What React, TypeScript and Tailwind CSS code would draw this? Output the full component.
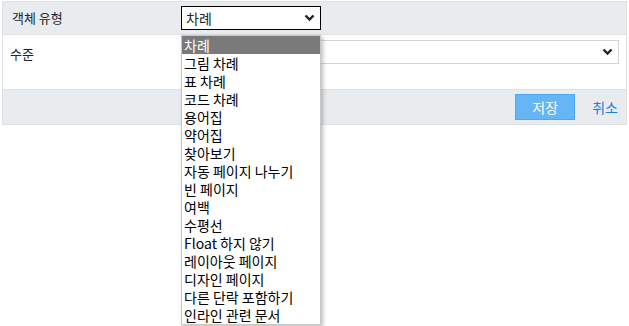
import React from 'react';

const items = [
  '차례',
  '그림 차례',
  '표 차례',
  '코드 차례',
  '용어집',
  '약어집',
  '찾아보기',
  '자동 페이지 나누기',
  '빈 페이지',
  '여백',
  '수평선',
  'Float 하지 않기',
  '레이아웃 페이지',
  '디자인 페이지',
  '다른 단락 포함하기',
  '인라인 관련 문서',
];

function Chevron() {
  return (
    <svg width="11" height="8" viewBox="0 0 11 8" className="shrink-0">
      <path d="M1.5 1.5 L5.5 5.5 L9.5 1.5" fill="none" stroke="#222" strokeWidth="2.4" />
    </svg>
  );
}

export default function App() {
  return (
    <div
      className="w-[629px] h-[326px] bg-white pt-px pl-[2px] text-[13px] text-[#212529]"
      style={{ fontFamily: '"Noto Sans CJK KR", "Noto Sans", sans-serif' }}
    >
      <div className="w-[625px] border border-[#dee2e6] relative">
        {/* 객체 유형 */}
        <div className="h-[33px] bg-[#e9ecef] border-b border-[#dee2e6] flex items-center">
          <div className="w-[178px] pl-[9px]">객체 유형</div>
          <div className="w-[140px] h-[24px] border border-black bg-white flex items-center justify-between pl-[4px] pr-[5px] text-[14px]">
            <span>차례</span>
            <Chevron />
          </div>
        </div>

        {/* 수준 */}
        <div className="h-[55px] bg-white border-b border-[#dee2e6] flex items-start pt-[5px]">
          <div className="w-[178px] pl-[7px] pt-[4px]">수준</div>
          <div className="w-[438px] h-[24px] border border-[#d4d4d4] bg-white flex items-center justify-end pr-[5px]">
            <Chevron />
          </div>
        </div>

        {/* actions */}
        <div className="h-[34px] bg-[#e9ecef] flex items-center justify-end pr-[8px] gap-[17px]">
          <button className="w-[60px] h-[26px] bg-[#66b5f5] border border-[#4ea7f2] text-white text-[14px]">
            저장
          </button>
          <span className="text-[#1c7ee0] text-[14px]">취소</span>
        </div>

        {/* opened select list */}
        <div className="absolute left-[178px] top-[33px] w-[140px] bg-white border border-[#c8c8c8] shadow-[2px_2px_4px_rgba(0,0,0,0.25)] text-[14px] text-black">
          {items.map((it, i) => (
            <div
              key={it}
              className={
                'h-[18px] leading-[18px] pl-[2px] whitespace-nowrap ' +
                (i === 0 ? 'bg-[#7a7a7a] text-white' : '')
              }
            >
              {it}
            </div>
          ))}
        </div>
      </div>
    </div>
  );
}
